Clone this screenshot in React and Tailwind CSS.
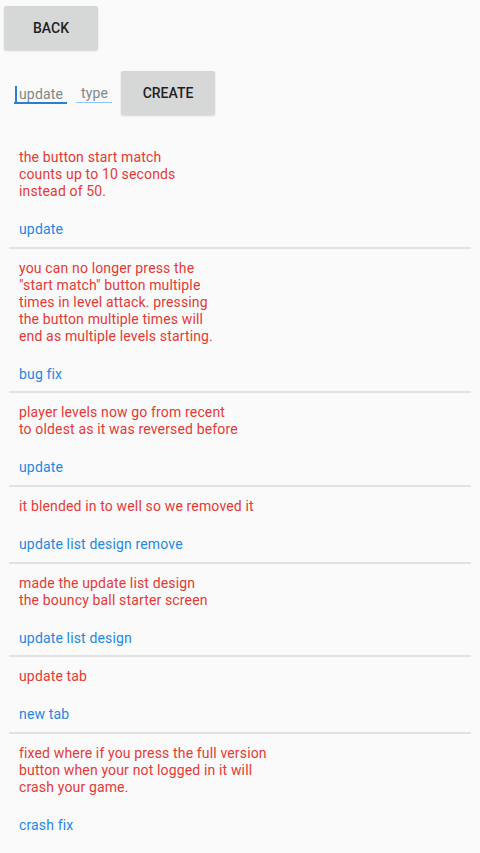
import React from 'react';

const entries = [
  { lines: ['the button start match', 'counts up to 10 seconds', 'instead of 50.'], type: 'update' },
  {
    lines: [
      'you can no longer press the',
      '"start match" button multiple',
      'times in level attack. pressing',
      'the button multiple times will',
      'end as multiple levels starting.',
    ],
    type: 'bug fix',
  },
  { lines: ['player levels now go from recent', 'to oldest as it was reversed before'], type: 'update' },
  { lines: ['it blended in to well so we removed it'], type: 'update list design remove' },
  { lines: ['made the update list design', 'the bouncy ball starter screen'], type: 'update list design' },
  { lines: ['update tab'], type: 'new tab' },
  {
    lines: ['fixed where if you press the full version', 'button when your not logged in it will', 'crash your game.'],
    type: 'crash fix',
  },
];

const App = () => {
  return (
    <div className="min-h-[853px] bg-[#fafafa] text-[14px]" style={{ fontFamily: 'Roboto, "Liberation Sans", sans-serif' }}>
      <button className="ml-[4px] mt-[6px] h-[44px] w-[94px] rounded-[2px] bg-[#d6d7d7] font-medium text-[#1f1f1f] shadow-[0_1px_2px_rgba(0,0,0,0.15)]">
        BACK
      </button>

      {/* formulaire */}
      <div className="mt-[21px] flex items-start pl-[14px]">
        <div className="mt-[15px] flex w-[53px] items-center border-b-2 border-[#2a7fd0]">
          <span className="ml-[1px] h-[16px] w-[2px] bg-[#2a7fd0]" />
          <span className="ml-[2px] h-[15px] leading-[15px] tracking-[0.15px] text-[#7f878c]">update</span>
        </div>
        <div className="ml-[9px] mt-[15px] flex w-[36px] items-center border-b border-[#8ec5f0] pb-[1px]">
          <span className="ml-[5px] h-[15px] leading-[15px] tracking-[0.15px] text-[#7f878c]">type</span>
        </div>
        <button className="ml-[9px] h-[44px] w-[94px] rounded-[2px] bg-[#d6d7d7] font-medium text-[#1f1f1f] shadow-[0_1px_2px_rgba(0,0,0,0.15)]">
          CREATE
        </button>
      </div>

      {/* liste des mises à jour */}
      <div className="mt-[23px] tracking-[0.15px]">
        {entries.map((entry, i) => (
          <div
            key={i}
            className={`mx-[9px] pt-[11px] pb-[8.7px] pl-[10px] ${i < entries.length - 1 ? 'border-b-2 border-[#e2e2e2]' : ''}`}
          >
            <div className="leading-[17px] text-[#e53935]">
              {entry.lines.map((line, j) => (
                <div key={j}>{line}</div>
              ))}
            </div>
            <div className="mt-[21px] leading-[17px] text-[#1e88e5]">{entry.type}</div>
          </div>
        ))}
      </div>
    </div>
  );
};

export default App;
